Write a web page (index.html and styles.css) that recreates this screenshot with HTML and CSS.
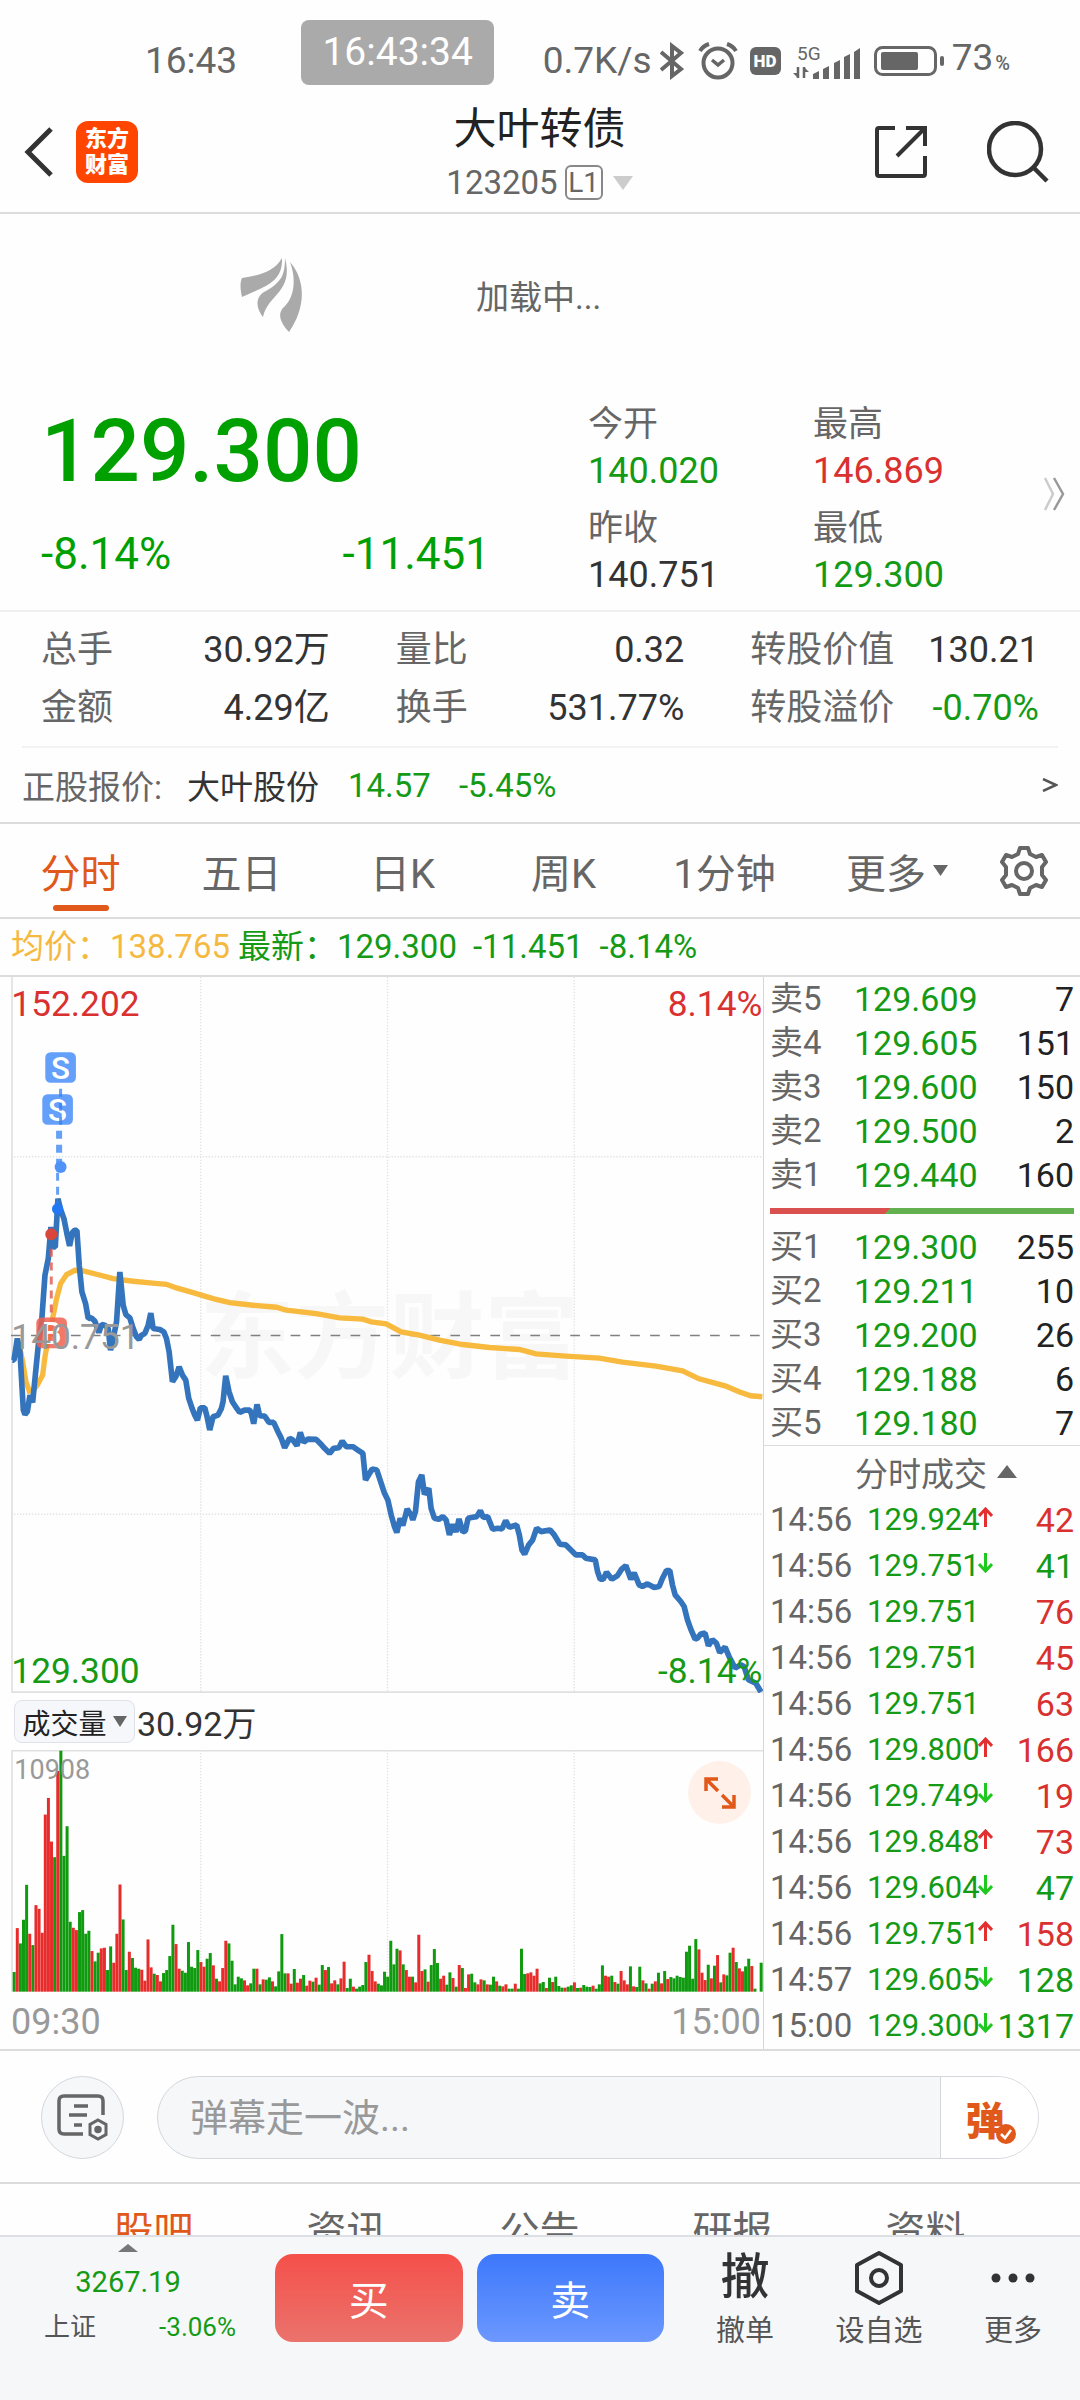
FILE: index.html
```html
<!DOCTYPE html>
<html lang="zh-CN">
<head>
<meta charset="utf-8">
<meta name="viewport" content="width=device-width, initial-scale=1">
<title>大叶转债 123205</title>
<link rel="stylesheet" href="styles.css">
</head>
<body>
<div class="status">
  <span class="status-time">16:43</span>
  <span class="status-pill">16:43:34</span>
  <div class="status-right">
    <span>0.7K/s</span>
    <svg width="24" height="38" viewBox="0 0 24 38" fill="none" stroke="#666" stroke-width="4"><path d="M1 10 L21 27 L12 34 V4 L21 11 L1 28"/></svg>
    <svg class="alarm" width="40" height="38" viewBox="0 0 40 38" fill="none" stroke="#666"><circle cx="20" cy="21" r="14.5" stroke-width="4"/><path d="M14 18 L20 23 L26 18" stroke-width="3.5"/><path d="M2 9 Q5 4 11 2 M38 9 Q35 4 29 2" stroke-width="4"/></svg>
    <svg width="31" height="28" viewBox="0 0 31 28"><rect width="31" height="28" rx="6" fill="#666"/><text x="15" y="20" class="hd-text" text-anchor="middle">HD</text></svg>
    <svg width="67" height="36" viewBox="0 0 67 36" fill="#666"><text x="4" y="17" class="fiveg-text">5G</text><path d="M5 24 V35 M11 35 V24" stroke="#666" stroke-width="2.500"/><path d="M0 30 H5 V35 Z M16 29 H11 V24 Z"/><path d="M20 31 L26 28 V36 H20Z M30 26 L36 23 V36 H30Z M41 20 L47 17 V36 H41Z M51 14 L57 11 V36 H51Z M61 9 L67 5 V36 H61Z"/></svg>
    <svg class="battery" width="70" height="30" viewBox="0 0 70 30"><rect x="1.500" y="1.500" width="60" height="27" rx="7" fill="none" stroke="#666" stroke-width="3"/><rect x="7" y="6" width="37" height="18" rx="2" fill="#666"/><rect x="66" y="10" width="4" height="10" rx="2" fill="#666"/></svg>
    <span class="pct">73<small>%</small></span>
  </div>
</div>

<header class="header">
  <div class="header-left">
    <button class="icon-btn" aria-label="返回"><svg width="34" height="52" viewBox="0 0 34 52" fill="none" stroke="#333" stroke-width="5"><path d="M29 3 L6 26 L29 49"/></svg></button>
    <div class="logo"><span>东方</span><span>财富</span></div>
  </div>
  <div class="header-title">
    <h1>大叶转债</h1>
    <button class="code">123205<span class="level">L1</span><svg width="20" height="14" viewBox="0 0 20 14"><path d="M0 0 H20 L10 14Z" fill="#ccc"/></svg></button>
  </div>
  <div class="header-right">
    <button class="icon-btn" aria-label="分享"><svg width="52" height="52" viewBox="0 0 52 52" fill="none" stroke="#333" stroke-width="4"><path d="M20 2 H4 Q2 2 2 4 V48 Q2 50 4 50 H48 Q50 50 50 48 V30 M50 20 V2 H31 M50 2 L22 30"/></svg></button>
    <button class="icon-btn" aria-label="搜索"><svg width="62" height="62" viewBox="0 0 62 62" fill="none" stroke="#333" stroke-width="4.500"><circle cx="28" cy="28" r="26"/><path d="M47 47 L60 60"/></svg></button>
  </div>
</header>

<main class="main">
  <div class="loading">
    <svg class="loading-logo" width="66" height="74" viewBox="0 0 66 74" fill="#aaa"><path d="M42 0 C43 24 26 28 2 39 C0 30 0 24 2 20 C20 17 34 14 42 0Z"/><path d="M45 0 C54 34 28 36 23 59 C14 47 17 37 26 33 C42 24 45 16 45 0Z"/><path d="M50 4 C66 22 66 50 49 74 C38 62 38 54 45 48 C55 38 56 20 50 4Z"/></svg>
    <span>加载中...</span>
  </div>

  <section class="quote">
    <div class="quote-main">
      <div class="price">129.300</div>
      <div class="change"><span>-8.14%</span><span>-11.451</span></div>
    </div>
    <dl class="quote-side">
      <div><dt>今开</dt><dd class="down">140.020</dd></div>
      <div><dt>最高</dt><dd class="up">146.869</dd></div>
      <div><dt>昨收</dt><dd>140.751</dd></div>
      <div><dt>最低</dt><dd class="down">129.300</dd></div>
    </dl>
    <button class="icon-btn quote-more" aria-label="展开"><svg width="22" height="34" viewBox="0 0 22 34" fill="none" stroke-width="2.500"><path d="M2 1 L10 17 L2 33" stroke="#ccc"/><path d="M11 1 L20 17 L11 33" stroke="#999"/></svg></button>
  </section>

  <dl class="stats">
    <div><dt>总手</dt><dd>30.92万</dd></div>
    <div><dt>量比</dt><dd>0.32</dd></div>
    <div><dt>转股价值</dt><dd>130.21</dd></div>
    <div><dt>金额</dt><dd>4.29亿</dd></div>
    <div><dt>换手</dt><dd>531.77%</dd></div>
    <div><dt>转股溢价</dt><dd class="down">-0.70%</dd></div>
  </dl>

  <a class="underlying" href="#">
    <span class="muted">正股报价:</span><span class="name">大叶股份</span><span class="down">14.57</span><span class="down">-5.45%</span>
    <svg width="16" height="14" viewBox="0 0 16 14" fill="none" stroke="#555" stroke-width="2.500"><path d="M1 1 L14 7 L1 13"/></svg>
  </a>

  <nav class="tabs">
    <button class="tab active">分时</button>
    <button class="tab">五日</button>
    <button class="tab">日K</button>
    <button class="tab">周K</button>
    <button class="tab">1分钟</button>
    <button class="tab">更多<svg width="15" height="11" viewBox="0 0 15 11"><path d="M0 0 H15 L7.500 11Z" fill="#666"/></svg></button>
    <button class="tab" aria-label="设置"><svg width="48" height="50" viewBox="0 0 48 50" fill="none" stroke="#666" stroke-width="4" stroke-linejoin="round"><path d="M20 2 H28 L30 8 L36 11 L42 9 L46 16 L42 21 V29 L46 34 L42 41 L36 39 L30 42 L28 48 H20 L18 42 L12 39 L6 41 L2 34 L6 29 V21 L2 16 L6 9 L12 11 L18 8Z"/><circle cx="24" cy="25" r="8"/></svg></button>
  </nav>

  <div class="legend"><span class="avg">均价：138.765</span><span class="down">最新：129.300</span><span class="down">-11.451</span><span class="down">-8.14%</span></div>

  <section class="market">
    <div class="charts">
      <svg class="price-chart" viewBox="33 24 2259 2151" role="img" aria-label="分时走势">
        <text x="600" y="1208" class="watermark">东方财富</text>
        <g class="grid"><path d="M603 24 V2175 M1164 24 V2175 M1725 24 V2175 M33 564 H2292 M33 1638 H2292"/></g>
        <path class="frame" d="M36 24 V2172 H2292"/>
        <path class="base" d="M33 1101 H2292"/>
        <polyline class="avg-line" points="60,1140 68,1180 78,1240 88,1268 100,1265 112,1250 128,1220 135,1165 145,1110 158,1050 170,990 182,945 200,918 225,905 250,907 290,917 340,930 400,938 450,943 500,947 530,958 580,972 640,990 690,1002 760,1010 830,1016 860,1025 950,1035 1020,1048 1090,1052 1115,1060 1160,1066 1205,1090 1260,1100 1320,1115 1390,1128 1470,1137 1560,1143 1610,1156 1700,1163 1800,1169 1870,1181 1970,1193 2050,1207 2100,1231 2180,1253 2220,1270 2255,1282 2290,1285"/>
        <polyline class="price-line" points="37,1175 42,1175 52,1110 60,1150 70,1325 75,1338 82,1330 90,1280 98,1302 108,1200 115,1130 125,1060 135,920 145,870 153,775 160,835 166,835 174,690 182,722 192,750 202,800 209,832 217,792 224,785 231,785 238,890 246,970 257,1005 265,1050 275,1048 285,1058 297,1092 305,1068 315,1070 325,1080 332,1145 340,1110 350,1060 360,910 370,1010 378,1038 390,1048 400,1080 410,1105 418,1113 425,1100 435,1095 445,1070 453,1034 460,1080 480,1083 492,1090 500,1110 508,1150 518,1240 528,1225 538,1195 548,1220 558,1235 567,1290 577,1320 585,1340 593,1355 602,1318 615,1318 622,1345 630,1385 640,1345 655,1340 665,1320 670,1300 678,1222 688,1270 698,1300 708,1315 720,1332 735,1325 750,1325 755,1335 762,1366 772,1308 780,1342 795,1343 808,1362 822,1362 835,1390 845,1410 855,1438 870,1410 880,1415 892,1432 902,1392 912,1422 925,1412 950,1413 962,1425 975,1440 990,1455 1002,1440 1018,1438 1028,1418 1040,1435 1060,1435 1075,1445 1090,1455 1098,1535 1118,1502 1132,1505 1155,1575 1165,1595 1175,1640 1185,1675 1192,1693 1202,1650 1210,1672 1223,1622 1235,1640 1240,1655 1248,1630 1257,1540 1267,1520 1275,1578 1288,1560 1295,1620 1305,1650 1318,1653 1330,1645 1340,1655 1350,1700 1360,1668 1370,1691 1379,1652 1390,1691 1398,1688 1406,1650 1420,1647 1432,1645 1443,1627 1452,1648 1465,1645 1480,1683 1495,1680 1508,1682 1519,1657 1530,1677 1552,1670 1560,1700 1568,1745 1576,1758 1588,1730 1600,1715 1612,1680 1625,1690 1652,1685 1665,1700 1682,1728 1700,1730 1715,1745 1730,1760 1750,1760 1760,1770 1788,1775 1795,1810 1803,1833 1812,1833 1822,1812 1838,1833 1855,1822 1868,1802 1880,1792 1895,1833 1905,1814 1920,1850 1930,1855 1945,1847 1965,1858 1980,1855 1990,1830 2002,1807 2012,1807 2020,1850 2028,1880 2045,1900 2055,1915 2065,1955 2075,1983 2088,2013 2095,2010 2105,1998 2118,1995 2128,2033 2140,2015 2152,2025 2162,2053 2178,2037 2190,2065 2208,2100 2225,2090 2235,2095 2248,2135 2270,2145 2286,2172"/>
        <g class="sell-mark">
          <rect x="136" y="250" width="92" height="92" rx="16"/><rect x="127" y="376" width="92" height="92" rx="16"/>
          <text x="182" y="330">S</text><text x="173" y="456">S</text>
          <path d="M182 360 V595"/><path d="M173 486 V720"/>
          <circle cx="182" cy="595" r="18"/><circle class="solid" cx="173" cy="721" r="17"/>
        </g>
        <g class="buy-mark">
          <path d="M154 840 V1040"/><circle cx="154" cy="797" r="18"/><rect x="109" y="1047" width="92" height="92" rx="16"/><text x="155" y="1127">B</text>
        </g>
        <text class="lbl up-fill" x="34" y="141">152.202</text>
        <text class="lbl up-fill" x="2290" y="141" text-anchor="end">8.14%</text>
        <text class="lbl mid-fill" x="34" y="1143">140.751</text>
        <text class="lbl down-fill" x="34" y="2144">129.300</text>
        <text class="lbl down-fill" x="2290" y="2144" text-anchor="end">-8.14%</text>
      </svg>
      <div class="vol-head">
        <button class="chip">成交量<svg width="14" height="11" viewBox="0 0 14 11"><path d="M0 0 H14 L7 11Z" fill="#666"/></svg></button>
        <span>30.92万</span>
      </div>
      <div class="vol-wrap">
        <svg class="vol-chart" viewBox="0 0 2259 726" role="img" aria-label="成交量">
          <g class="grid"><path d="M570 0 V726 M1131 0 V726 M1692 0 V726"/></g>
          <path class="frame" d="M3 726 V2 H2259"/>
          <g id="bars"></g>
          <text class="vol-max" x="10" y="88">10908</text>
        </svg>
        <button class="expand" aria-label="全屏"><svg width="32" height="32" viewBox="0 0 32 32" fill="none" stroke="#e0591a" stroke-width="3.500"><path d="M14 2 H2 V14 M2 2 L14 14 M30 18 V30 H18 M30 30 L18 18"/></svg></button>
      </div>
      <div class="axis"><span>09:30</span><span>15:00</span></div>
    </div>

    <aside class="book">
      <table class="depth">
        <tr><th>卖5</th><td>129.609</td><td>7</td></tr>
        <tr><th>卖4</th><td>129.605</td><td>151</td></tr>
        <tr><th>卖3</th><td>129.600</td><td>150</td></tr>
        <tr><th>卖2</th><td>129.500</td><td>2</td></tr>
        <tr><th>卖1</th><td>129.440</td><td>160</td></tr>
      </table>
      <div class="ratio"></div>
      <table class="depth">
        <tr><th>买1</th><td>129.300</td><td>255</td></tr>
        <tr><th>买2</th><td>129.211</td><td>10</td></tr>
        <tr><th>买3</th><td>129.200</td><td>26</td></tr>
        <tr><th>买4</th><td>129.188</td><td>6</td></tr>
        <tr><th>买5</th><td>129.180</td><td>7</td></tr>
      </table>
      <button class="trades-head">分时成交<svg width="20" height="13" viewBox="0 0 20 13"><path d="M0 13 H20 L10 0Z" fill="#666"/></svg></button>
      <table class="trades">
        <tr><th>14:56</th><td>129.924</td><td class="a-up"></td><td class="up">42</td></tr>
        <tr><th>14:56</th><td>129.751</td><td class="a-down"></td><td class="down">41</td></tr>
        <tr><th>14:56</th><td>129.751</td><td></td><td class="up">76</td></tr>
        <tr><th>14:56</th><td>129.751</td><td></td><td class="up">45</td></tr>
        <tr><th>14:56</th><td>129.751</td><td></td><td class="up">63</td></tr>
        <tr><th>14:56</th><td>129.800</td><td class="a-up"></td><td class="up">166</td></tr>
        <tr><th>14:56</th><td>129.749</td><td class="a-down"></td><td class="up">19</td></tr>
        <tr><th>14:56</th><td>129.848</td><td class="a-up"></td><td class="up">73</td></tr>
        <tr><th>14:56</th><td>129.604</td><td class="a-down"></td><td class="down">47</td></tr>
        <tr><th>14:56</th><td>129.751</td><td class="a-up"></td><td class="up">158</td></tr>
        <tr><th>14:57</th><td>129.605</td><td class="a-down"></td><td class="down">128</td></tr>
        <tr><th>15:00</th><td>129.300</td><td class="a-down"></td><td class="down">1317</td></tr>
      </table>
    </aside>
  </section>

  <form class="danmu">
    <button type="button" class="round" aria-label="弹幕设置"><svg width="52" height="50" viewBox="0 0 52 50" fill="none" stroke="#666" stroke-width="3.500"><path d="M46 22 V8 Q46 3 41 3 H7 Q2 3 2 8 V36 Q2 41 7 41 H26"/><path d="M17 13 H31 M12 22 H30 M17 32 H25"/><path d="M41 27 L49 31.500 V41.500 L41 46 L33 41.500 V31.500Z" stroke-width="3"/><circle cx="41" cy="36.500" r="2" fill="#666"/></svg></button>
    <div class="field">
      <input type="text" aria-label="弹幕" placeholder="弹幕走一波...">
      <button type="button" class="dan" aria-label="弹幕开关">弹<svg width="20" height="20" viewBox="0 0 20 20"><circle cx="10" cy="10" r="10" fill="#e0591a"/><path d="M5 10 L9 14 L15 6" fill="none" stroke="#fff" stroke-width="2.500"/></svg></button>
    </div>
  </form>

  <nav class="news">
    <button class="active">股吧</button><button>资讯</button><button>公告</button><button>研报</button><button>资料</button>
  </nav>
</main>

<footer class="bar">
  <button class="index">
    <svg width="20" height="8" viewBox="0 0 20 8"><path d="M0 8 H20 L10 0Z" fill="#777"/></svg>
    <span class="index-value down">3267.19</span>
    <span class="index-row"><span>上证</span><span class="down">-3.06%</span></span>
  </button>
  <div class="deal"><button class="buy">买</button><button class="sell">卖</button></div>
  <div class="actions">
    <button><span class="glyph">撤</span>撤单</button>
    <button><span class="glyph"><svg width="50" height="54" viewBox="0 0 50 54" fill="none" stroke="#333" stroke-width="4" stroke-linejoin="round"><path d="M25 2 L47 14 V40 L25 52 L3 40 V14Z"/><circle cx="25" cy="27" r="8"/></svg></span>设自选</button>
    <button><span class="glyph"><svg width="44" height="10" viewBox="0 0 44 10" fill="#333"><circle cx="5" cy="5" r="4.500"/><circle cx="22" cy="5" r="4.500"/><circle cx="39" cy="5" r="4.500"/></svg></span>更多</button>
  </div>
</footer>
<script src="chart.js"></script>
</body>
</html>
```
FILE: styles.css
```css
* { box-sizing: border-box; }
body {
  margin: 0;
  height: 100vh;
  display: flex;
  flex-direction: column;
  overflow: hidden;
  background: #fefefe;
  color: #333;
  font-family: Roboto, "Noto Sans CJK SC", sans-serif;
  font-size: 36px;
}
button, input { font: inherit; color: inherit; border: 0; padding: 0; background: none; }
svg { display: block; flex: none; }
dl, dd, h1 { margin: 0; font-weight: 400; }
table { border-collapse: collapse; width: 100%; table-layout: fixed; }
th, td { padding: 0; font-weight: 400; text-align: left; }
.up { color: #d93030; }
.down { color: #159a15; }
.muted { color: #666; }

.status { display: flex; flex: none; align-items: center; height: 95px; padding: 0 70px 0 145px; color: #666; font-size: 37px; line-height: 64px; }
.status-time { padding-top: 26px; }
.status-pill { margin: 10px 0 0 64px; width: 193px; height: 65px; border-radius: 8px; background: #aaa; color: #fff; font-size: 39px; text-align: center; }
.status-right { display: flex; align-items: center; gap: 12px; margin-left: auto; padding-top: 26px; }
.status-right span:first-child { margin-right: -4px; }
.alarm, .battery { margin-left: 2px; }
.status-right .pct { margin-left: -4px; }
.pct small { font-size: 20px; font-weight: 500; margin-left: 2px; }
.hd-text { font-size: 17px; font-weight: 900; fill: #fff; }
.fiveg-text { font-size: 19px; }

.header { display: grid; flex: none; grid-template-columns: 1fr auto 1fr; align-items: center; height: 119px; padding: 0 31px 0 22px; border-bottom: 2px solid #dcdcdc; }
.header-left, .header-right { display: flex; align-items: center; margin-top: -4px; }
.header-left { gap: 20px; }
.header-right { justify-content: flex-end; gap: 60px; }
.logo { display: flex; flex-direction: column; justify-content: center; width: 62px; height: 62px; border-radius: 12px; background: #ff4500; color: #fff; font-size: 22px; line-height: 26px; font-weight: 900; text-align: center; }
.header-title { text-align: center; padding-left: 8px; }
.header-title h1 { font-size: 43px; line-height: 58px; color: #222; }
.code { display: flex; align-items: center; justify-content: center; font-size: 33px; line-height: 50px; color: #666; margin: 0 auto; }
.level { margin: 0 10px 0 7px; width: 38px; border: 2px solid #888; border-radius: 6px; font-size: 28px; line-height: 31px; }

.main { flex: 1; min-height: 0; overflow: hidden; }
.loading { display: flex; align-items: center; height: 162px; padding: 0 0 0 240px; font-size: 33px; color: #666; }
.loading span { margin-left: 170px; }

.quote { position: relative; display: grid; grid-template-columns: 588fr 492fr; padding: 25px 0 11px; border-bottom: 2px solid #f0f0f0; }
.quote-main { padding: 0 98px 0 41px; color: #00a000; }
.price { font-size: 87px; line-height: 100px; font-weight: 500; }
.change { display: flex; justify-content: space-between; margin-top: 25px; font-size: 44px; line-height: 56px; }
.quote-side { display: grid; grid-template-columns: 225px 1fr; row-gap: 10px; line-height: 47px; }
.quote-side dt { color: #666; font-size: 35px; }
.quote-more { position: absolute; right: 15px; top: 101px; }

.stats { display: grid; grid-template-columns: repeat(3, 1fr); column-gap: 66px; margin: 0 22px; padding: 9px 19px 9px; line-height: 58px; border-bottom: 2px solid #f3f3f3; }
.stats div { display: flex; justify-content: space-between; }
.stats dt { color: #666; }

.underlying { display: flex; align-items: center; height: 76px; padding: 0 22px; font-size: 33px; color: #333; text-decoration: none; border-bottom: 2px solid #dcdcdc; }
.underlying .name { margin: 0 29px 0 25px; }
.underlying .down + .down { margin-left: 28px; }
.underlying svg { margin-left: auto; }

.tabs { display: grid; grid-template-columns: repeat(5, 161fr) 184fr 91fr; height: 95px; border-bottom: 2px solid #dcdcdc; font-size: 40px; color: #666; }
.tab { display: flex; position: relative; align-items: center; justify-content: center; gap: 7px; }
.tab:last-child { justify-content: flex-start; padding-left: 11px; }
.tab.active { color: #e0591a; }
.tab.active::after { content: ""; position: absolute; bottom: 6px; width: 56px; height: 6px; border-radius: 3px; background: #e0591a; }

.legend { display: flex; height: 58px; padding-left: 11px; font-size: 33px; line-height: 56px; border-bottom: 2px solid #dcdcdc; }
.legend .avg { color: #f5b93f; margin-right: 8px; }
.legend .down + .down { margin-left: 16px; }

.market { display: grid; grid-template-columns: 1fr 317px; border-bottom: 2px solid #dcdcdc; }
.charts { padding-left: 11px; }
.price-chart, .vol-chart { width: 100%; height: auto; overflow: hidden; }
.watermark { font-size: 285px; font-weight: 700; fill: #f7f7f7; }
.grid path { fill: none; stroke: #e2e2e2; stroke-width: 4; stroke-dasharray: 4 5; }
.frame { fill: none; stroke: #e0e0e0; stroke-width: 5; }
.base { stroke: #808080; stroke-width: 5; stroke-dasharray: 29 31; }
.avg-line { fill: none; stroke: #f7b93e; stroke-width: 16; }
.price-line { fill: none; stroke: #3474bd; stroke-width: 17; stroke-linejoin: bevel; }
.sell-mark rect { fill: #64a0fa; }
.sell-mark path { fill: none; stroke: #2f7ff0; stroke-opacity: .75; stroke-width: 9; stroke-dasharray: 24 18; }
.sell-mark circle { fill: #4f93f7; }
.sell-mark .solid { fill: #2277f2; }
.sell-mark text, .buy-mark text { fill: #fff; font-size: 94px; font-weight: 500; text-anchor: middle; }
.buy-mark rect { fill: #f0604f; fill-opacity: .85; }
.buy-mark circle { fill: #d8463c; }
.buy-mark path { fill: none; stroke: #dd5a50; stroke-opacity: .8; stroke-width: 9; stroke-dasharray: 24 18; }
.lbl { font-size: 106px; }
.up-fill { fill: #d93030; }
.down-fill { fill: #159a15; }
.mid-fill { fill: #999; }

.vol-head { display: flex; align-items: center; height: 57px; padding-left: 3px; font-size: 34px; }
.chip { display: flex; align-items: center; justify-content: center; gap: 6px; width: 121px; height: 43px; margin-right: 2px; border: 1px solid #dfe2e8; border-radius: 8px; background: #f6f7fa; color: #222; font-size: 28px; }
.vol-wrap { position: relative; }
.vol-max { font-size: 81px; fill: #999; }
.vol-up { fill: #e82c2c; }
.vol-down { fill: #0f9a0f; }
.expand { position: absolute; right: 12px; top: 11px; display: grid; place-items: center; width: 63px; height: 63px; border-radius: 50%; background: #fff1ea; }
.axis { display: flex; justify-content: space-between; padding: 3px 2px 0 0; font-size: 36px; line-height: 54px; color: #999; }

.book { border-left: 1px solid #d6d6d6; }
.depth, .trades { font-size: 34px; }
.depth tr { height: 44px; }
.depth th, .depth td { line-height: 44px; }
.depth th { width: 90px; padding-left: 6px; font-size: 33px; color: #666; }
.depth td:nth-child(2) { width: 126px; color: #159a15; }
.depth td:last-child { padding-right: 6px; text-align: right; color: #222; }
.ratio { height: 6px; margin: 11px 6px; background: linear-gradient(135deg, #d9504f 0 39%, #63b14e 39%); }
.trades-head { display: flex; align-items: center; justify-content: center; gap: 10px; width: 100%; height: 52px; padding-left: 28px; border-top: 1px solid #dcdcdc; font-size: 33px; color: #666; }
.trades tr { height: 46px; }
.trades th { width: 103px; padding-left: 6px; font-size: 33px; color: #666; }
.trades th, .trades td { line-height: 46px; }
.trades td:nth-child(2) { width: 111px; font-size: 31px; color: #159a15; }
.trades td:nth-child(3) { width: 17px; }
.trades td:last-child { padding-right: 6px; text-align: right; }
.a-up, .a-down { font-size: 0; }
.arrow { width: 15px; height: 20px; fill: none; stroke-width: 3; margin-bottom: 6px; }
.a-up .arrow { stroke: #e23030; }
.a-down .arrow { stroke: #1fc81f; }

.danmu { display: flex; align-items: center; gap: 33px; height: 133px; padding: 2px 41px 0; border-bottom: 2px solid #dcdcdc; }
.round { display: grid; place-items: center; flex: none; width: 83px; height: 83px; border: 1px solid #d3d7dc; border-radius: 50%; background: #f6f7f9; }
.field { display: flex; flex: 1; height: 83px; overflow: hidden; border: 1px solid #d3d7dc; border-radius: 42px; background: #f6f7f9; }
.field input { flex: 1; min-width: 0; padding-left: 32px; font-size: 38px; outline: 0; }
.field input::placeholder { color: #999; opacity: 1; }
.dan { position: relative; width: 98px; padding-right: 9px; border-left: 1px solid #d3d7dc; background: #fff; color: #e0591a; font-size: 39px; font-weight: 900; }
.dan svg { position: absolute; right: 22px; bottom: 14px; }

.news { display: grid; grid-template-columns: repeat(5, 1fr); padding: 18px 58px 0 57px; font-size: 40px; line-height: 60px; color: #666; }
.news .active { color: #e0591a; }

.bar { display: grid; grid-template-columns: 275fr 389fr 416fr; flex: none; min-height: 165px; border-top: 2px solid #dcdfe3; background: #f6f7f9; padding-top: 7px; }
.index { display: flex; flex-direction: column; align-items: center; padding: 0 39px 0 44px; font-size: 26px; color: #555; }
.index > svg, .index-value { margin-right: 24px; }
.index-value { margin-top: 12px; font-size: 29px; line-height: 36px; }
.index-row { display: flex; justify-content: space-between; width: 100%; margin-top: 9px; line-height: 36px; }
.deal { display: flex; gap: 14px; padding-top: 10px; }
.deal button { flex: 1; height: 88px; border-radius: 18px; color: #fff; font-size: 40px; }
.buy { background: linear-gradient(#f5504a, #ea736c); }
.sell { background: linear-gradient(#3d78fb, #6c98ff); }
.actions { display: grid; grid-template-columns: repeat(3, 1fr); padding-left: 14px; }
.actions button { display: flex; flex-direction: column; align-items: center; font-size: 29px; line-height: 36px; color: #555; }
.glyph { display: grid; place-items: center; height: 66px; margin-bottom: 2px; margin-top: 1px; font-size: 49px; line-height: 66px; font-weight: 500; color: #333; }
```
FILE: chart.js
```javascript
// One entry per minute: g = falling, r = rising, then the traded volume on the chart's scale.
const volumes = `g59 r191 g145 g216 g321 r174 g140 r260 r249 r177 r532 r582 r451 g404 r663 g724 g408 g497 g210 r192
r185 g239 g245 g174 g183 r122 g91 g117 r130 r132 g65 g136 r87 r174 r322 g217 g65 r120 g101 g72
g69 r66 r33 r157 r73 g54 r50 r31 g56 g65 g107 g201 r143 r69 g63 g57 g149 g75 g71 g125
r89 r75 g99 g116 r79 g39 r31 r71 r153 g145 g93 g22 g45 g40 r34 r19 g25 g69 r69 g22
r37 g36 g43 r31 g16 g61 g173 g55 r55 r24 g68 r27 r39 g50 r18 r33 g30 r42 g21 g80
r65 g74 r25 r34 g22 r40 r90 g11 g39 r15 g9 g15 g20 g89 r111 r62 r31 g24 g19 g60
g45 g153 g82 g129 r124 g82 r65 r45 g45 r28 r171 r62 g67 r30 g80 g128 g86 r39 r48 g21
g58 r41 g15 r80 g71 r11 r52 g54 g28 r22 r37 g34 r22 g21 g45 r31 g18 r16 r22 g9
g9 r24 g9 g129 g53 r55 r58 r48 r69 g25 g29 r11 g42 r29 g45 g17 g12 r12 g15 g19
r28 g11 r12 g20 g15 g14 r18 g9 g22 g79 r48 r45 g48 r29 g24 r62 r34 r22 g76 r16
g14 g75 r34 g25 r9 g24 r31 g57 r25 g62 r38 g44 g40 g48 g44 g42 g120 g138 g39 g158
r127 r57 r35 g81 r40 g78 r110 g28 r52 g49 g117 r132 g89 r70 r61 g76 g99 r77 g9 g0 g87`.split(/\s+/);

const NS = "http://www.w3.org/2000/svg";
const bars = document.getElementById("bars");
volumes.forEach((entry, i) => {
  const height = Number(entry.slice(1));
  const bar = document.createElementNS(NS, "rect");
  bar.setAttribute("x", 5 + i * 9.35);
  bar.setAttribute("y", 726 - height);
  bar.setAttribute("width", 9);
  bar.setAttribute("height", height);
  bar.setAttribute("class", entry[0] === "r" ? "vol-up" : "vol-down");
  bars.append(bar);
});

// Direction arrows of the trade list.
const arrows = { "a-up": "M7.5 20 V2 M1 9 L7.5 2 L14 9", "a-down": "M7.5 0 V18 M1 11 L7.5 18 L14 11" };
for (const [name, d] of Object.entries(arrows)) {
  document.querySelectorAll("." + name).forEach((cell) => {
    const svg = document.createElementNS(NS, "svg");
    const path = document.createElementNS(NS, "path");
    svg.setAttribute("class", "arrow");
    svg.setAttribute("viewBox", "0 0 15 20");
    path.setAttribute("d", d);
    svg.append(path);
    cell.append(svg);
  });
}
```
